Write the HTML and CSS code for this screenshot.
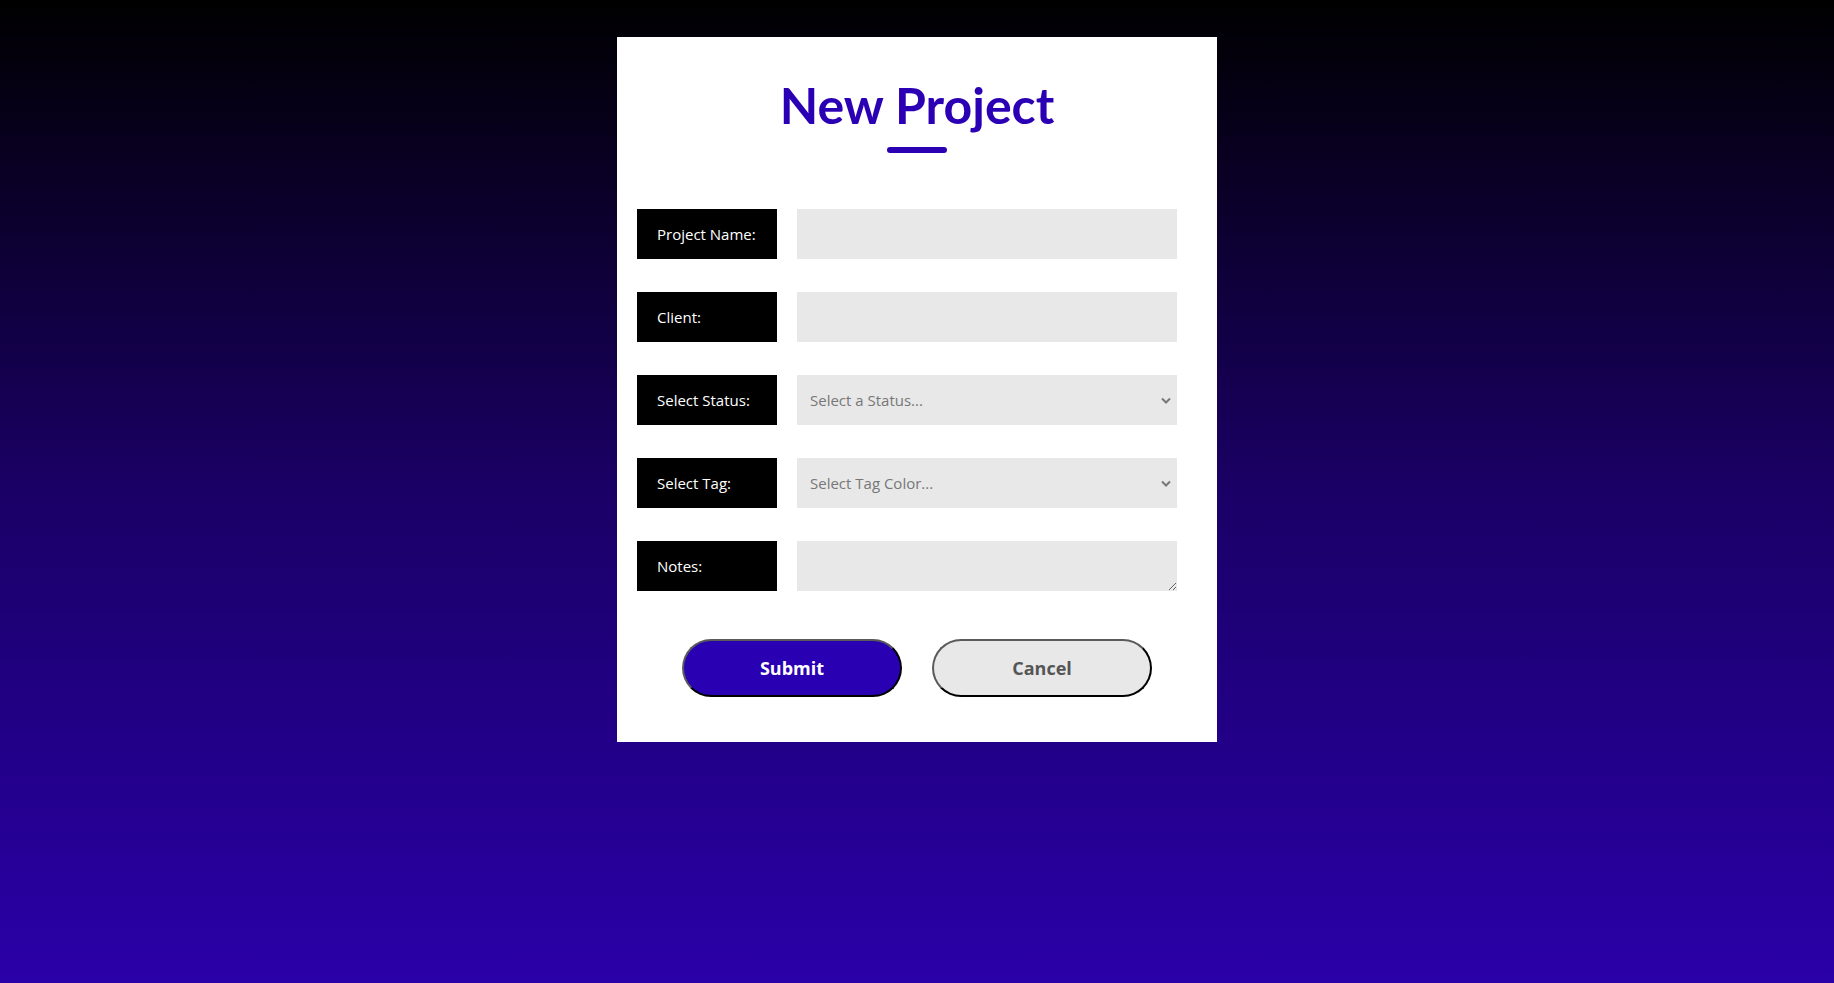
FILE: index.html
```html
<!DOCTYPE html>
<html lang="en">
<head>
<meta charset="utf-8">
<title>New Project</title>
<link rel="stylesheet" href="styles.css">
</head>
<body>
<main class="card">
  <h1 class="title">New Project</h1>
  <div class="title-bar"></div>
  <form class="form">
    <div class="row">
      <label class="label" for="pname">Project Name:</label>
      <input class="field" id="pname" type="text">
    </div>
    <div class="row">
      <label class="label" for="client">Client:</label>
      <input class="field" id="client" type="text">
    </div>
    <div class="row">
      <label class="label" for="status">Select Status:</label>
      <select class="field select" id="status">
        <option>Select a Status...</option>
      </select>
    </div>
    <div class="row">
      <label class="label" for="tag">Select Tag:</label>
      <select class="field select" id="tag">
        <option>Select Tag Color...</option>
      </select>
    </div>
    <div class="row">
      <label class="label" for="notes">Notes:</label>
      <textarea class="field area" id="notes"></textarea>
    </div>
    <div class="actions">
      <button type="button" class="btn btn-submit">Submit</button>
      <button type="button" class="btn btn-cancel">Cancel</button>
    </div>
  </form>
</main>
</body>
</html>
```
FILE: styles.css
```css
html, body {
  margin: 0;
  padding: 0;
  height: 100%;
}
body {
  background: linear-gradient(to bottom, #000000 0%, #1a0066 50%, #2a00a8 100%);
  font-family: "Open Sans", "Noto Sans", sans-serif;
  overflow: hidden;
}
.card {
  width: 600px;
  margin: 37px auto 0;
  background: #ffffff;
  padding: 38px 0 45px;
  box-sizing: border-box;
  display: flex;
  flex-direction: column;
  align-items: center;
}
.title {
  margin: 0;
  font-family: Lato, "Open Sans", sans-serif;
  font-weight: 700;
  font-size: 50px;
  line-height: 60px;
  color: #2b00b5;
}
.title-bar {
  width: 60px;
  height: 6px;
  border-radius: 3px;
  background: #2b00b5;
  margin-top: 12px;
}
.form {
  margin-top: 56px;
  width: 100%;
  display: flex;
  flex-direction: column;
  gap: 33px;
}
.row {
  display: flex;
  gap: 20px;
  padding-left: 20px;
}
.label {
  width: 140px;
  height: 50px;
  box-sizing: border-box;
  padding-left: 20px;
  background: #000;
  color: #fff;
  font-size: 15px;
  display: flex;
  align-items: center;
}
.field {
  width: 380px;
  height: 50px;
  box-sizing: border-box;
  border: none;
  background: #e8e8e8;
  font-family: "Open Sans", "Noto Sans", sans-serif;
  font-size: 15px;
  padding: 0 13px;
  margin: 0;
  outline: none;
}
.select {
  color: #777;
  appearance: none;
  -webkit-appearance: none;
  background-image: url("data:image/svg+xml,%3Csvg xmlns='http://www.w3.org/2000/svg' width='10' height='7' viewBox='0 0 10 7'%3E%3Cpath d='M1 1.5l4 4 4-4' fill='none' stroke='%23777' stroke-width='2'/%3E%3C/svg%3E");
  background-repeat: no-repeat;
  background-position: right 6px center;
  background-size: 10px 7px;
}
.area {
  resize: vertical;
  padding: 8px 13px;
  display: block;
}
.actions {
  margin-top: 15px;
  display: flex;
  justify-content: center;
  gap: 30px;
}
.btn {
  width: 220px;
  height: 58px;
  border-radius: 29px;
  border: 2px solid;
  border-color: #5a5a5a #000 #000 #5a5a5a;
  font-family: "Open Sans", "Noto Sans", sans-serif;
  font-weight: 700;
  font-size: 18px;
  cursor: pointer;
}
.btn-submit {
  background: #2a00b3;
  color: #fff;
}
.btn-cancel {
  background: #e8e8e8;
  color: #555;
}
```
